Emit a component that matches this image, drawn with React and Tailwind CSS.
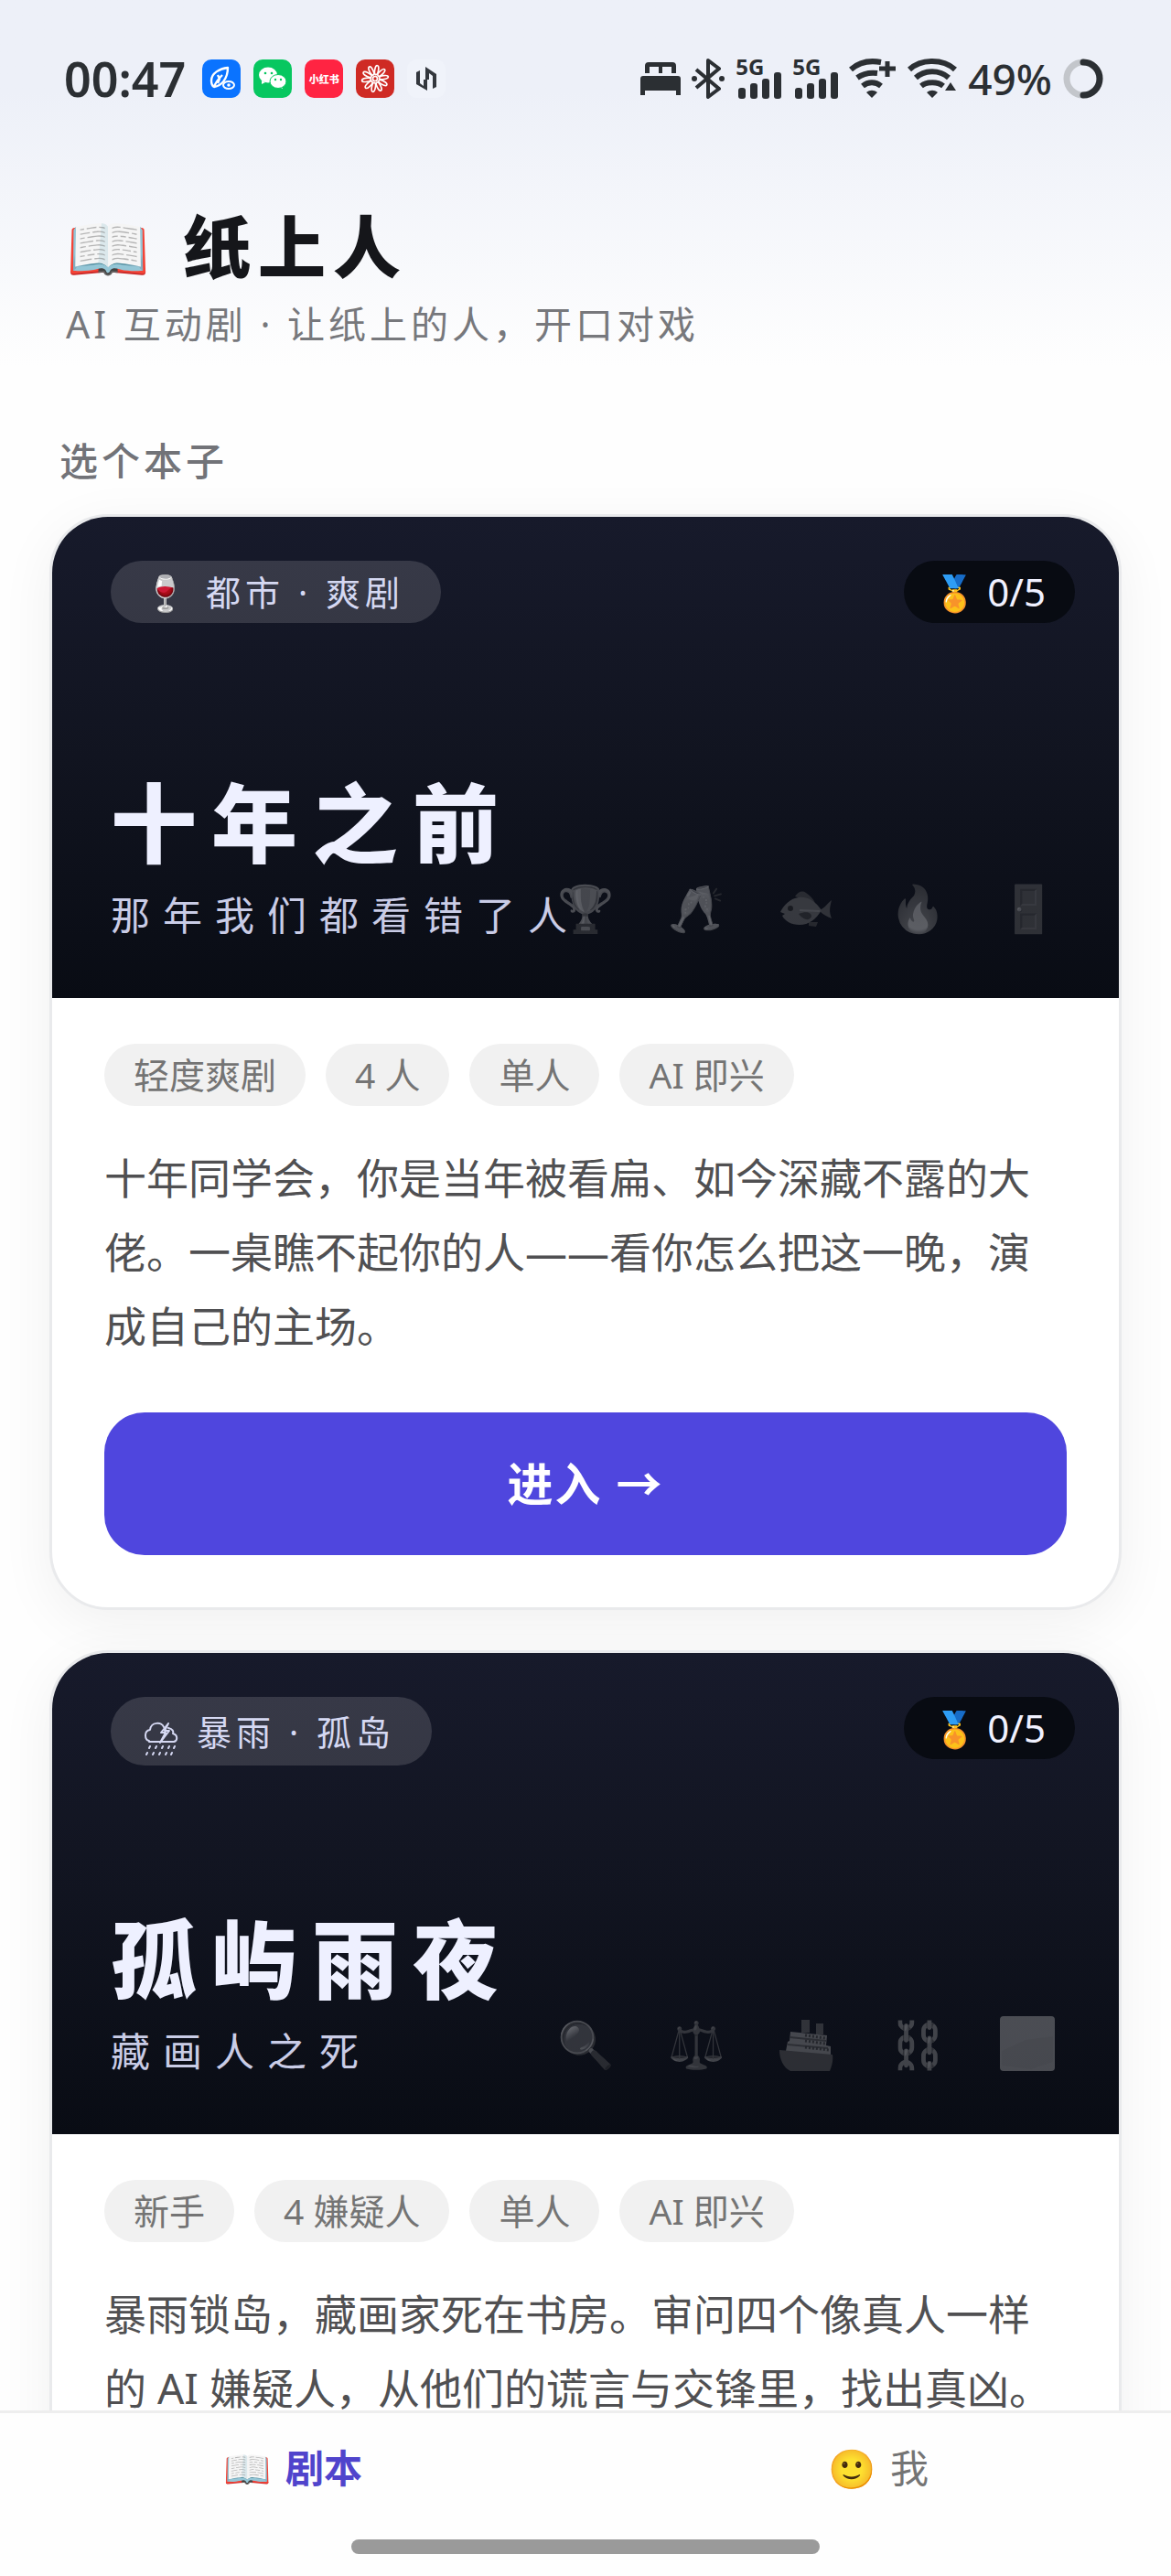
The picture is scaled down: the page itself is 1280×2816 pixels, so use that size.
import { useState } from 'react';

const scripts = [
  {
    id: 'ten-years',
    genreIcon: '🍷',
    genre: '都市 · 爽剧',
    title: '十年之前',
    subtitle: '那年我们都看错了人',
    props: ['🏆', '🥂', 'fish', '🔥', '🚪'],
    tags: ['轻度爽剧', '4 人', '单人', 'AI 即兴'],
    summary:
      '十年同学会，你是当年被看扁、如今深藏不露的大佬。一桌瞧不起你的人——看你怎么把这一晚，演成自己的主场。',
  },
  {
    id: 'island-night',
    genreIcon: 'storm',
    genre: '暴雨 · 孤岛',
    title: '孤屿雨夜',
    subtitle: '藏画人之死',
    props: ['🔍', '⚖️', 'ship', '⛓️', 'paper'],
    tags: ['新手', '4 嫌疑人', '单人', 'AI 即兴'],
    summary:
      '暴雨锁岛，藏画家死在书房。审问四个像真人一样的 AI 嫌疑人，从他们的谎言与交锋里，找出真凶。',
  },
];

function SignalIcon() {
  return (
    <div className="flex flex-col w-[50px] h-11">
      <span className="text-[24px] leading-[18px] font-bold">5G</span>
      <svg viewBox="0 0 50 30" className="w-[50px] h-[30px] -mt-1" fill="currentColor">
        <rect x="3" y="18" width="8" height="12" rx="3" />
        <rect x="16" y="13" width="8" height="17" rx="3" />
        <rect x="29" y="8" width="8" height="22" rx="3" />
        <rect x="42" y="1" width="8" height="29" rx="3" />
      </svg>
    </div>
  );
}

function StatusBar() {
  return (
    <div className="flex items-center justify-between h-[172px] pl-[70px] pr-[74px] text-[#2b2f33]">
      <div className="flex items-center">
        <span className="text-[52px] leading-[60px] font-semibold">00:47</span>
        <div className="flex items-center gap-[14px] ml-[18px]">
          <svg viewBox="0 0 42 42" className="size-[42px]">
            <rect width="42" height="42" rx="10" fill="#0a73ff" />
            <path
              d="M28 9c-9 1-18 6-18 14 0 4 1 6 3 7 8-1 15-9 15-21z M13 30c2-6 5-9 9-13 M17 17l2 4-2 5"
              fill="none"
              stroke="#fff"
              strokeWidth="2.4"
              strokeLinejoin="round"
            />
            <ellipse cx="29" cy="28" rx="6" ry="4" fill="#0a73ff" stroke="#fff" strokeWidth="2" />
            <circle cx="29" cy="28" r="1.8" fill="#fff" />
          </svg>
          <svg viewBox="0 0 42 42" className="size-[42px]">
            <rect width="42" height="42" rx="10" fill="#07c760" />
            <path d="M9 23l0 4 4-2z M31 28l1 4-4-2z" fill="#fff" />
            <ellipse cx="16" cy="17" rx="10" ry="8.5" fill="#fff" />
            <ellipse cx="27" cy="24" rx="9" ry="7.5" fill="#fff" stroke="#07c760" strokeWidth="1" />
            <circle cx="13" cy="15" r="1.3" fill="#07c760" />
            <circle cx="20" cy="15" r="1.3" fill="#07c760" />
            <circle cx="24" cy="22" r="1.2" fill="#07c760" />
            <circle cx="30" cy="22" r="1.2" fill="#07c760" />
          </svg>
          <span className="flex items-center justify-center size-[42px] rounded-[10px] bg-[#ff2442] text-white text-[11px] font-black font-['Noto_Sans_CJK_SC',sans-serif]">
            小红书
          </span>
          <svg viewBox="0 0 42 42" className="size-[42px]">
            <rect width="42" height="42" rx="10" fill="#cf2a24" />
            <g fill="none" stroke="#fff" strokeWidth="1.7">
              {[0, 36, 72, 108, 144, 180, 216, 252, 288, 324].map((angle) => (
                <ellipse key={angle} cx="21" cy="11.5" rx="2" ry="5" transform={`rotate(${angle + 10} 21 21)`} />
              ))}
              <circle cx="21" cy="21" r="2.5" />
            </g>
          </svg>
          <svg viewBox="0 0 42 42" className="size-[42px]">
            <rect width="42" height="42" rx="10" fill="#f0f3fa" />
            <path d="M10 14l4-2v14l4 3v-7h4v12l-12-7zM20 8l12 8v14l-4 2V18l-4-3v7h-4z" fill="#33373d" />
          </svg>
        </div>
      </div>
      <div className="flex items-center gap-3">
        <svg viewBox="0 0 44 36" className="w-11 h-9" fill="currentColor">
          <path d="M9 0h26a4 4 0 0 1 4 4v8H34V5H24v7H20V5H10v7H5V4a4 4 0 0 1 4-4z" />
          <path d="M3 15h38a3 3 0 0 1 3 3v18h-5v-5H5v5H0V18a3 3 0 0 1 3-3z" />
        </svg>
        <svg viewBox="0 0 36 44" className="w-9 h-11" fill="none" stroke="currentColor" strokeWidth="4">
          <path d="M5 12l25 21-12 9V2l12 9L5 32" strokeLinejoin="round" />
          <circle cx="3" cy="22" r="3" fill="currentColor" stroke="none" />
          <circle cx="33" cy="22" r="3" fill="currentColor" stroke="none" />
        </svg>
        <SignalIcon />
        <SignalIcon />
        <svg viewBox="0 0 52 44" className="w-[52px] h-11" fill="none" stroke="currentColor" strokeWidth="6">
          <path d="M2 12C12 3 24 2 35 4M9 21c7-5 14-6 22-5M15 30c6-5 14-5 20 0" />
          <path d="M25 43l-6-6c4-3 8-3 12 0z" fill="currentColor" stroke="none" />
          <path d="M42 3v17M33 11h18" strokeWidth="5" />
        </svg>
        <svg viewBox="0 0 54 44" className="w-[54px] h-11" fill="none" stroke="currentColor" strokeWidth="6">
          <path d="M2 12C15 0 39 0 52 12M9 21c10-9 26-9 36 0M15 30c6-5 18-5 24 0" />
          <path d="M27 43l-6-6c4-3 8-3 12 0zM47 26l6 9H41z" fill="currentColor" stroke="none" />
        </svg>
        <span className="text-[46px] leading-[60px] font-medium">49%</span>
        <svg viewBox="0 0 44 44" className="size-11" fill="none" strokeWidth="7">
          <circle cx="22" cy="22" r="18" stroke="#c3c6cb" />
          <path d="M22 4a18 18 0 0 1 0 36" stroke="#2b2f33" strokeLinecap="round" />
        </svg>
      </div>
    </div>
  );
}

function StormIcon() {
  return (
    <span className="flex items-center h-[75px] pt-4 pr-1">
      <svg
        viewBox="0 0 38 38"
        className="size-[38px]"
        fill="none"
        stroke="currentColor"
        strokeWidth="2"
        strokeLinecap="round"
        strokeLinejoin="round"
      >
        <path d="M6 21C1 20 0 10 7 9 8 0 20 0 22 6M27 7c5 1 6 4 5 6 6 2 5 8 1 9H6" />
        <path d="M27 2l-8 10h5l-6 11 10-13h-5z" />
        <path d="M7 27l-1 2M14 27l-1 2M21 27l-1 2M28 27l-1 2M34 27l-1 2M4 34l-1 2M11 34l-1 2M18 34l-1 2M25 34l-1 2M31 34l-1 2" />
      </svg>
    </span>
  );
}

function Prop({ name }) {
  if (name === 'fish') {
    return (
      <svg viewBox="0 0 60 60" className="size-[60px]">
        <path d="M45 33c5-2 9-8 13-11-2 8-3 12 0 20-5-2-9-4-13-8z" fill="#777" />
        <path d="M33 46l10 0-2 5-8-1z" fill="#5a5a5a" />
        <path d="M18 18c3-5 8-7 12-4 5 3 8 7 10 11z" fill="#626262" />
        <path d="M2 35C6 27 13 20 22 19c10-1 18 4 25 14-6 10-14 16-24 16-9 0-16-4-19-10l3-2z" fill="#8a8a8a" />
        <path d="M22 37c8-3 14-2 14 3-2 5-9 4-14-3z" fill="#4a4a4a" />
        <path d="M23 33l22 1" stroke="#b4b4b4" strokeWidth="2" />
        <circle cx="13" cy="31" r="3" fill="#333" />
      </svg>
    );
  }
  if (name === 'ship') {
    return (
      <svg viewBox="0 0 60 60" className="size-[60px]">
        <path d="M25 4h9v14h-9zM41 8h8v12h-8z" fill="#777" />
        <path d="M13 17l40 4-1 11 5 1v11L8 38l2-10 2-1z" fill="#b4b4b4" />
        <path d="M12 23l40 4M10 31l44 4" stroke="#6a6a6a" strokeWidth="2" />
        <path d="M29 21l22 3M29 27l22 3M29 34l26 3" stroke="#555" strokeWidth="3" strokeDasharray="2 2" />
        <path d="M1 37l58 5c1 7-1 13-3 18H13C5 56 1 47 1 37z" fill="#6c6c6c" />
      </svg>
    );
  }
  if (name === 'paper') {
    return (
      <svg viewBox="0 0 60 60" className="size-[60px]">
        <rect width="60" height="60" rx="4" fill="#c2c2c2" />
        <path d="M2 38l26-12 30-4v28l-24 8-32-4z" fill="#b8b8b8" />
      </svg>
    );
  }
  return <span className="w-[60px] text-center text-[50px] leading-[60px]">{name}</span>;
}

function ScriptCard({ script }) {
  return (
    <article className="rounded-[64px] border-[3px] border-[#e9eaec] bg-white overflow-hidden shadow-[0_14px_60px_rgba(0,0,0,0.06)]">
      <div className="relative flex flex-col justify-between h-[526px] px-16 pt-12 pb-[60px] bg-linear-to-b from-[#171a2b] via-[#111420] to-[#090c14]">
        <div className="flex items-start justify-between -mr-4">
          <span className="flex items-center gap-4 min-h-[68px] pl-9 pr-10 rounded-full bg-white/14 text-[#d5d8f2] text-[38px] leading-[68px] tracking-[5px]">
            {script.genreIcon === 'storm' ? <StormIcon /> : <span>{script.genreIcon}</span>}
            {script.genre}
          </span>
          <span className="flex items-center gap-3 h-[68px] px-8 rounded-full bg-[#080b12] text-[#f0f1ff] text-[42px] leading-[66px]">
            <span className="text-[38px]">🏅</span>0/5
          </span>
        </div>
        <div>
          <h2 className="text-[94px] leading-[110px] font-black tracking-[16px] text-[#eef0ff]">{script.title}</h2>
          <p className="mt-4 text-[43px] leading-[60px] tracking-[14px] text-[#c9cce6]">{script.subtitle}</p>
        </div>
        <div className="absolute right-[70px] bottom-[69px] flex gap-[61px] opacity-34 grayscale" aria-hidden="true">
          {script.props.map((prop) => (
            <Prop key={prop} name={prop} />
          ))}
        </div>
      </div>
      <div className="p-[57px] pt-[50px]">
        <ul className="flex flex-wrap gap-[22px]">
          {script.tags.map((tag) => (
            <li key={tag} className="h-[68px] px-8 rounded-full bg-[#f1f1f1] text-[#747474] text-[39px] leading-[68px]">
              {tag}
            </li>
          ))}
        </ul>
        <p className="mt-[38px] text-[46px] leading-[81px] text-[#505052]">{script.summary}</p>
        <button
          type="button"
          className="mt-[54px] w-full h-[156px] rounded-[44px] bg-[#4f46de] text-white text-[50px] font-bold tracking-[2px]"
        >
          进入 →
        </button>
      </div>
    </article>
  );
}

export default function App() {
  const [tab, setTab] = useState('scripts');

  return (
    <div className="h-screen flex flex-col bg-[#fefefe] font-['Noto_Sans','Noto_Sans_CJK_SC',sans-serif]">
      <div className="flex-1 min-h-0 overflow-y-auto [scrollbar-width:none] bg-linear-to-b from-[#edf0f8] from-[100px] to-[#fefefe] to-[400px]">
        <StatusBar />
        <header className="px-[72px] pt-11">
          <h1 className="flex items-center gap-7 text-[74px] leading-[108px] font-black tracking-[8px] text-[#15161a]">
            <span>📖</span>
            纸上人
          </h1>
          <p className="text-[41px] leading-[60px] tracking-[4px] text-[#77787c]">AI 互动剧 · 让纸上的人，开口对戏</p>
        </header>
        <main className="px-[54px] pt-[90px]">
          <p className="pl-[11px] mb-7 text-[42px] leading-[60px] font-medium tracking-[4px] text-[#727378]">选个本子</p>
          <div className="flex flex-col gap-11">
            {scripts.map((script) => (
              <ScriptCard key={script.id} script={script} />
            ))}
          </div>
        </main>
      </div>
      <nav className="shrink-0 border-t-[3px] border-[#eeeeee] bg-[#fefefe] pt-[30px] pb-6">
        <div className="flex text-[42px] leading-[60px]">
          <button
            type="button"
            onClick={() => setTab('scripts')}
            className={`flex-1 flex items-center justify-center gap-4 ${tab === 'scripts' ? 'font-bold text-[#5044cc]' : 'text-[#747474]'}`}
          >
            <span>📖</span>剧本
          </button>
          <button
            type="button"
            onClick={() => setTab('me')}
            className={`flex-1 flex items-center justify-center gap-4 ${tab === 'me' ? 'font-bold text-[#5044cc]' : 'text-[#747474]'}`}
          >
            <span>🙂</span>我
          </button>
        </div>
        <div className="mx-auto mt-12 w-2/5 h-4 rounded-full bg-[#9a9a9a]" />
      </nav>
    </div>
  );
}
